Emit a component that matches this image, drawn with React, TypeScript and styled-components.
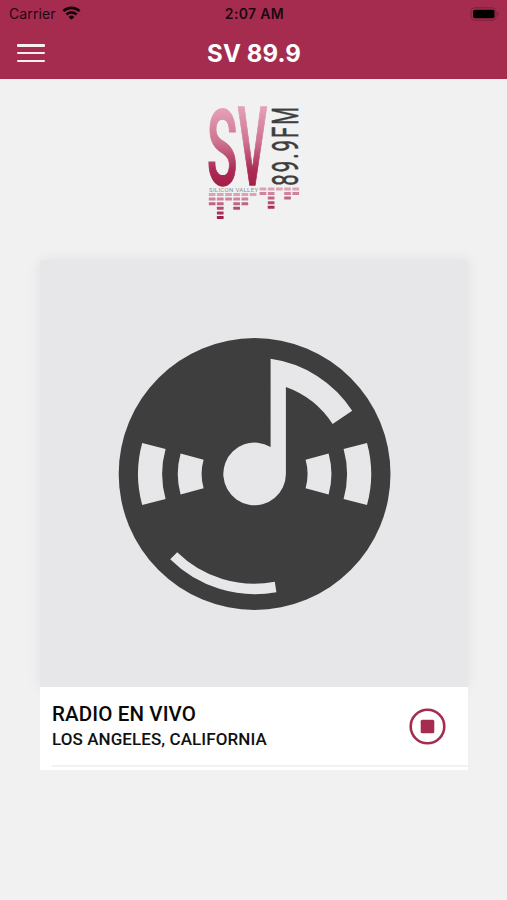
import styled, { createGlobalStyle } from "styled-components";

const GlobalStyle = createGlobalStyle`
  body {
    margin: 0;
    background: #f1f1f1;
  }
`;

const Screen = styled.div`
  min-height: 900px;
  display: flex;
  flex-direction: column;
  background: #f1f1f1;
  font-family: Roboto, sans-serif;
`;

const Header = styled.header`
  height: 79px;
  background: #a62c4f;
`;

const StatusBar = styled.div`
  height: 27px;
  display: grid;
  grid-template-columns: 1fr auto 1fr;
  align-items: center;
  padding: 0 7px 0 9px;
  color: #1b0810;
  font-family: Inter, sans-serif;
`;

const Carrier = styled.div`
  display: flex;
  align-items: center;
  gap: 6px;
  font-size: 14px;
  letter-spacing: 0.1px;
`;

const Clock = styled.div`
  font-size: 14px;
  font-weight: 600;
  letter-spacing: 0.35px;
`;

const Battery = styled.svg`
  justify-self: end;
`;

const NavBar = styled.div`
  height: 52px;
  display: grid;
  grid-template-columns: 1fr auto 1fr;
  align-items: center;
  padding: 0 16px 0 17px;
`;

const MenuButton = styled.button`
  width: 28px;
  height: 18px;
  padding: 0;
  border: 0;
  background: none;
  display: flex;
  flex-direction: column;
  justify-content: space-between;
`;

const MenuLine = styled.span`
  align-self: stretch;
  height: 2.5px;
  border-radius: 1px;
  background: #fbeff2;
`;

const Title = styled.h1`
  margin: 0;
  padding-top: 2px;
  color: #fff;
  font-family: Inter, sans-serif;
  font-size: 24px;
  font-weight: 700;
  line-height: 30px;
  letter-spacing: 0.1px;
`;

const LogoArea = styled.div`
  display: flex;
  justify-content: center;
  padding-top: 21px;
  height: 160px;
`;

const LogoDrawing = styled.svg`
  overflow: visible;
`;

const Player = styled.main`
  width: 428px;
  margin-left: 40px;
`;

const Cover = styled.div`
  height: 427px;
  display: flex;
  align-items: center;
  justify-content: center;
  background: #e7e7e9;
  box-shadow: 0 0 14px rgba(0, 0, 0, 0.07);
`;

const Info = styled.div`
  position: relative;
  height: 83px;
  box-sizing: border-box;
  padding: 0 0 3px 12px;
  background: #fff;
`;

const InfoRow = styled.div`
  height: 80px;
  box-sizing: border-box;
  display: flex;
  align-items: center;
  justify-content: space-between;
  padding-right: 22px;
  border-bottom: 2px solid #f2f2f2;
`;

const Station = styled.div`
  color: #080808;
  font-weight: 500;
  font-size: 20.5px;
  line-height: 26px;
  letter-spacing: 0.13px;
`;

const Place = styled.div`
  color: #111;
  font-weight: 500;
  font-size: 17px;
  line-height: 25px;
  letter-spacing: 0.08px;
`;

const StopButton = styled.button`
  width: 37px;
  height: 37px;
  padding: 0;
  border: 0;
  background: none;
`;

const shades = ["#dda3b5", "#d0839b", "#c26583", "#b64b6e", "#ac3159", "#9f2149"];

const bars = [
    { x: 208.8, y: 193, count: 3 },
    { x: 216.9, y: 193, count: 6 },
    { x: 225.2, y: 193, count: 2 },
    { x: 233.3, y: 193, count: 4 },
    { x: 241.5, y: 193, count: 3 },
    { x: 249.7, y: 193, count: 1 },
    { x: 259.6, y: 187.4, count: 2 },
    { x: 267.8, y: 187.4, count: 5 },
    { x: 276, y: 187.4, count: 1 },
    { x: 284.2, y: 187.4, count: 3 },
    { x: 292.4, y: 187.4, count: 2 },
];

function WifiIcon() {
    return (
        <svg width="19" height="15" viewBox="0 0 19 15" fill="none" stroke="#14050b" strokeWidth="2.6">
            <path d="M1.4 5.2a11.5 11.5 0 0 1 16.2 0" />
            <path d="M4.4 8.5a7.2 7.2 0 0 1 10.2 0" />
            <path d="M9.5 13.8 6.6 10.9a4.1 4.1 0 0 1 5.8 0z" fill="#14050b" stroke="none" />
        </svg>
    );
}

function Logo() {
    return (
        <LogoDrawing width="108" height="126" viewBox="200 100 108 126">
            <defs>
                <linearGradient id="fade" gradientUnits="userSpaceOnUse" x1="0" y1="-73" x2="0" y2="0">
                    <stop offset="0" stopColor="#e5a3b8" />
                    <stop offset="0.45" stopColor="#cd7490" />
                    <stop offset="0.8" stopColor="#ab2c55" />
                    <stop offset="1" stopColor="#a3204b" />
                </linearGradient>
            </defs>
            <g
                fill="url(#fade)"
                stroke="url(#fade)"
                strokeWidth="1.4"
                fontFamily="Roboto, sans-serif"
                fontSize="100"
                fontWeight="500"
            >
                <text transform="translate(206.9 184.5) scale(0.5 1.06)">S</text>
                <text transform="translate(237.8 185.4) scale(0.455 1.09)">V</text>
            </g>
            <text
                transform="translate(298.4 185.8) rotate(-90) scale(0.53 0.98)"
                fill="#3d3d3f"
                stroke="#3d3d3f"
                strokeWidth="0.6"
                fontFamily="Roboto, sans-serif"
                fontSize="38.5"
                textLength="149"
            >
                89.9FM
            </text>
            <text
                x="209"
                y="192"
                fill="#8d8d8f"
                fontFamily="Roboto, sans-serif"
                fontSize="6"
                textLength="49"
            >
                SILICON VALLEY
            </text>
            {bars.map((bar) =>
                shades.slice(0, bar.count).map((shade, i) => (
                    <rect key={`${bar.x}-${i}`} x={bar.x} y={bar.y + i * 4.6} width="6.7" height="3" rx="0.5" fill={shade} />
                ))
            )}
        </LogoDrawing>
    );
}

function Waves() {
    return (
        <>
            <path d="M-112.4-31 -89-25A93 93 0 0 0-89 25L-112.4 31A117 117 0 0 1-112.4-31Z" />
            <path d="M-74-20.6-51-14.3A53 53 0 0 0-51 14.3L-74 20.6A77 77 0 0 1-74-20.6Z" />
        </>
    );
}

function Disc() {
    return (
        <svg width="276" height="276" viewBox="-138.6 -138 276 276">
            <circle r="135.9" fill="#3e3e3e" />
            <g fill="#e7e7e9">
                <Waves />
                <g transform="scale(-1 1)">
                    <Waves />
                </g>
                <path d="M16-115.2A116.5 116.5 0 0 1 97.6-63.2L78-50A93 93 0 0 0 31.3-87V0A31.3 31.3 0 1 1 16-27Z" />
                <path d="M-84.4 85.3A120 120 0 0 0 21.8 118.2L20.2 107.8A110 110 0 0 1-77.4 78.3Z" />
            </g>
        </svg>
    );
}

function App() {
    return (
        <Screen>
            <GlobalStyle />
            <Header>
                <StatusBar>
                    <Carrier>
                        Carrier
                        <WifiIcon />
                    </Carrier>
                    <Clock>2:07 AM</Clock>
                    <Battery width="31" height="14" viewBox="0 0 31 14">
                        <rect x="2" y="0.8" width="25" height="12.4" rx="3.6" fill="none" stroke="#7c203a" />
                        <rect x="4" y="2.8" width="21.5" height="8.4" rx="1.8" fill="#000" />
                        <path d="M28.3 5v4q1.5-.5 1.5-2t-1.5-2" fill="#7c203a" />
                    </Battery>
                </StatusBar>
                <NavBar>
                    <MenuButton aria-label="Menu">
                        <MenuLine />
                        <MenuLine />
                        <MenuLine />
                    </MenuButton>
                    <Title>SV 89.9</Title>
                </NavBar>
            </Header>
            <LogoArea>
                <Logo />
            </LogoArea>
            <Player>
                <Cover>
                    <Disc />
                </Cover>
                <Info>
                    <InfoRow>
                        <div>
                            <Station>RADIO EN VIVO</Station>
                            <Place>LOS ANGELES, CALIFORNIA</Place>
                        </div>
                        <StopButton aria-label="Stop">
                            <svg width="37" height="37" viewBox="0 0 37 37">
                                <circle cx="18.5" cy="18.5" r="16.8" fill="none" stroke="#a62c4f" strokeWidth="2.6" />
                                <rect x="11.7" y="11.7" width="13.6" height="13.6" rx="1.6" fill="#a62c4f" />
                            </svg>
                        </StopButton>
                    </InfoRow>
                </Info>
            </Player>
        </Screen>
    );
}

export default App;
